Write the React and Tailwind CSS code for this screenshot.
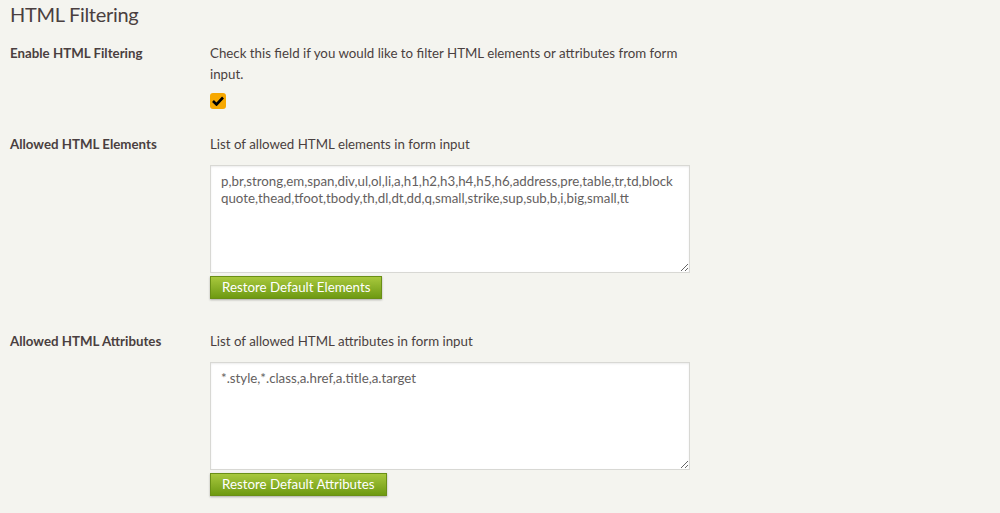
import React from 'react';

const elements =
  'p,br,strong,em,span,div,ul,ol,li,a,h1,h2,h3,h4,h5,h6,address,pre,table,tr,td,blockquote,thead,tfoot,tbody,th,dl,dt,dd,q,small,strike,sup,sub,b,i,big,small,tt';
const attributes = '*.style,*.class,a.href,a.title,a.target';

function GreenButton({ children }) {
  return (
    <button className="h-[23px] px-[11px] text-[13.3px] text-white border border-[#6a8f16] bg-gradient-to-b from-[#a8c83c] to-[#6e9a10] shadow-[0_1px_2px_rgba(0,0,0,0.3)] leading-none">
      {children}
    </button>
  );
}

function TextRow({ label, desc, value, button }) {
  return (
    <div className="flex pl-[10px] pt-[25px]">
      <div className="w-[200px] font-bold text-[13.3px] leading-[21px]">{label}</div>
      <div>
        <p className="text-[13.3px] leading-[21px]">{desc}</p>
        <textarea
          readOnly
          value={value}
          className="mt-[10px] block w-[480px] h-[108px] bg-white border border-[#d8d8d4] px-[10px] py-[7px] text-[13.3px] leading-[17px] text-[#646060] resize-y shadow-[inset_0_1px_2px_rgba(0,0,0,0.08)] outline-none"
        />
        <div className="mt-[1px] mb-[7px]">
          <GreenButton>{button}</GreenButton>
        </div>
      </div>
    </div>
  );
}

export default function App() {
  return (
    <div
      className="min-h-[513px] bg-[#f4f4ef] text-[#4a3f40]"
      style={{ fontFamily: 'Lato, "Open Sans", sans-serif' }}
    >
      <h2 className="px-[10px] pt-[1px] text-[20px] tracking-[-0.3px] leading-[26px] text-[#4a3f40]">HTML Filtering</h2>
      <div className="flex pl-[10px] pt-[16px]">
        <div className="w-[200px] font-bold text-[13.3px] leading-[21px]">Enable HTML Filtering</div>
        <div className="w-[480px]">
          <p className="text-[13.3px] leading-[21px]">
            Check this field if you would like to filter HTML elements or attributes from form input.
          </p>
          <div className="mt-[8px] w-[16px] h-[16px] rounded-[3px] bg-[#f7a800] flex items-center justify-center">
            <svg width="12" height="10" viewBox="0 0 12 10">
              <path d="M1 5 L4.5 8.5 L11 1.5" stroke="#000" strokeWidth="2.6" fill="none" />
            </svg>
          </div>
        </div>
      </div>
      <TextRow
        label="Allowed HTML Elements"
        desc="List of allowed HTML elements in form input"
        value={elements}
        button="Restore Default Elements"
      />
      <TextRow
        label="Allowed HTML Attributes"
        desc="List of allowed HTML attributes in form input"
        value={attributes}
        button="Restore Default Attributes"
      />
    </div>
  );
}
